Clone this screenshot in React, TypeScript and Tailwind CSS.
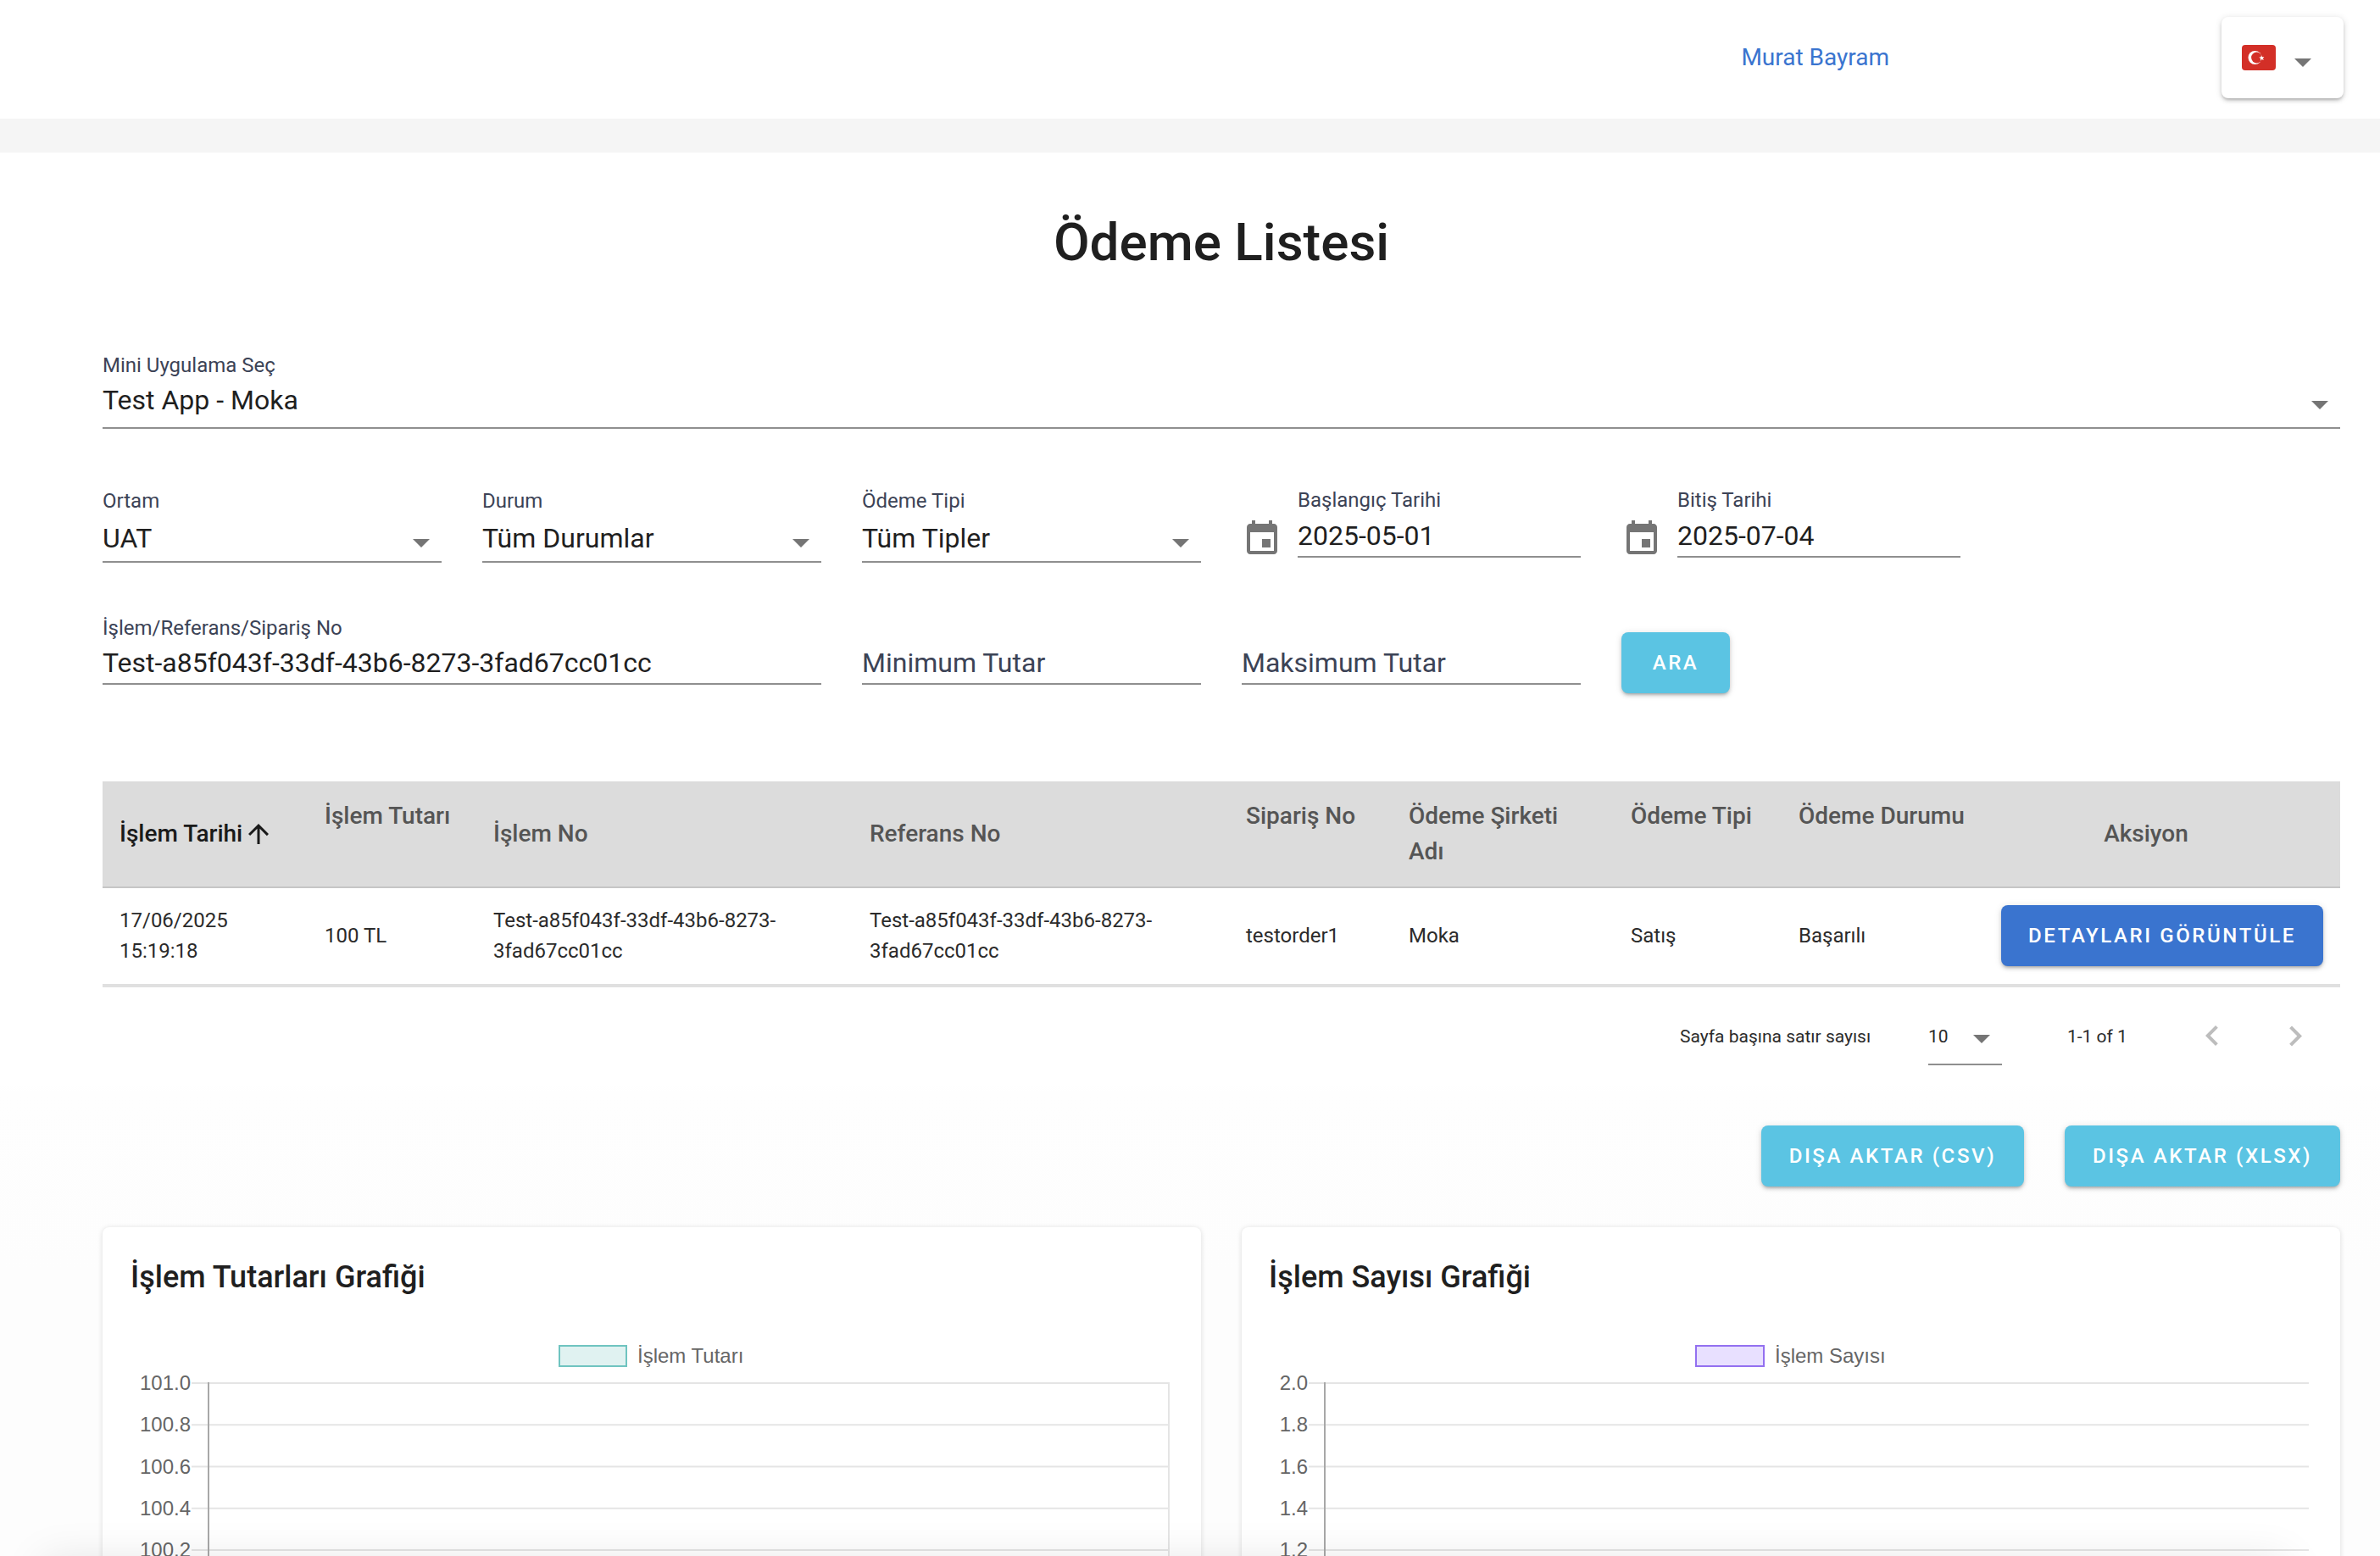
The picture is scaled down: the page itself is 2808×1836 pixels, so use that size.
import React from 'react';

const Caret = ({ className = '' }: { className?: string }) => (
  <svg width="20" height="10" viewBox="0 0 20 10" className={`shrink-0 ${className}`}>
    <path d="M0 0l10 10L20 0z" fill="#757575" />
  </svg>
);

const EventIcon = () => (
  <svg width="48" height="48" viewBox="0 0 24 24" fill="#757575" className="shrink-0 mt-[36px]">
    <path d="M17 12h-5v5h5v-5zM16 1v2H8V1H6v2H5c-1.11 0-1.99.9-1.99 2L3 19c0 1.1.89 2 2 2h14c1.1 0 2-.9 2-2V5c0-1.1-.9-2-2-2h-1V1h-2zm3 18H5V8h14v11z" />
  </svg>
);

const Field = ({
  label,
  value,
  rowClass,
  select,
  placeholder,
}: {
  label?: string;
  value: string;
  rowClass: string;
  select?: boolean;
  placeholder?: boolean;
}) => (
  <div className="min-w-0">
    <div className="h-[30px] text-[24px] leading-[28px] text-[#3c4356]">{label}</div>
    <div className={`flex justify-between border-b-2 border-[#8f8f8f] pr-[14px] ${rowClass}`}>
      <span className={`text-[32px] leading-[44px] ${placeholder ? 'text-[#3c4356]' : 'text-[#1f1f1f]'}`}>{value}</span>
      {select && <Caret className="mt-[23px]" />}
    </div>
  </div>
);

const DateField = ({ label, value }: { label: string; value: string }) => (
  <div className="flex gap-[18px]">
    <EventIcon />
    <div className="flex-1">
      <Field label={label} value={value} rowClass="h-[52px] pt-[4px]" />
    </div>
  </div>
);

const Button = ({ children, className }: { children: React.ReactNode; className: string }) => (
  <button
    className={`h-[72px] rounded-[8px] text-white font-medium text-[24px] tracking-[2.6px] shadow-[0_3px_3px_-2px_rgba(0,0,0,0.2),0_3px_4px_0_rgba(0,0,0,0.14),0_1px_8px_0_rgba(0,0,0,0.12)] ${className}`}
  >
    {children}
  </button>
);

const ChartCard = ({
  title,
  titlePad,
  legend,
  ticks,
  swatchFill,
  swatchStroke,
  swatchX,
  swatchW,
  labelRight,
  axisX,
  gridRight,
}: {
  title: string;
  titlePad: string;
  legend: string;
  ticks: string[];
  swatchFill: string;
  swatchStroke: string;
  swatchX: number;
  swatchW: number;
  labelRight: number;
  axisX: number;
  gridRight: number;
}) => (
  <div className="h-[600px] rounded-[8px] bg-white shadow-[0_1px_6px_rgba(0,0,0,0.14)]">
    <h3 className={`pt-[34px] h-[120px] text-[36px] leading-[50px] font-medium text-[#1f1f1f] ${titlePad}`}>{title}</h3>
    {/* chart.js canvas in the original */}
    <svg width="1296" height="480" className="block" style={{ fontFamily: '"Liberation Sans", Arial, sans-serif' }}>
      <rect x={swatchX + 1} y={20} width={swatchW - 2} height={24} fill={swatchFill} stroke={swatchStroke} strokeWidth="2" />
      <text x={swatchX + swatchW + 12} y={40} fontSize="24" fill="#666666">{legend}</text>
      {ticks.map((t, i) => {
        const y = 64 + i * 49.25;
        return (
          <g key={t}>
            <line x1={labelRight + 1} x2={gridRight} y1={y} y2={y} stroke="#e5e5e5" strokeWidth="2" />
            <text x={labelRight} y={y + 8} textAnchor="end" fontSize="24" fill="#666666">{t}</text>
          </g>
        );
      })}
      <line x1={axisX} x2={axisX} y1={63} y2={480} stroke="#a8a8a8" strokeWidth="2" />
      {gridRight < 1259 && <line x1={gridRight} x2={gridRight} y1={63} y2={480} stroke="#e5e5e5" strokeWidth="2" />}
    </svg>
  </div>
);

export default function App() {
  const th = 'px-[20px] py-[20px] text-[28px] leading-[42px] font-medium text-[#555555] text-left';
  const td = 'px-[20px] pb-[2px] text-[24px] leading-[36px] text-[#2b2b2b]';

  return (
    <div className="relative h-[1836px] overflow-hidden bg-[linear-gradient(#ffffff_1280px,#fefefe_1290px,#fdfdfd_1500px)] font-['Roboto',sans-serif]">
      {/* top bar */}
      <header className="h-[140px] flex items-center justify-end pr-[43px] pb-[4px]">
        <span className="text-[28px] text-[#3a74cf] mr-[392px]">Murat Bayram</span>
        <div className="w-[144px] h-[96px] rounded-[8px] bg-white flex items-center pl-[24px] shadow-[0_3px_3px_-2px_rgba(0,0,0,0.2),0_3px_4px_0_rgba(0,0,0,0.14),0_1px_8px_0_rgba(0,0,0,0.12)]">
          <svg width="40" height="30" viewBox="0 0 40 30" className="shrink-0">
            <rect width="40" height="30" rx="4" fill="#d32f27" />
            <circle cx="15.5" cy="15" r="8" fill="#fff" />
            <circle cx="17.5" cy="15" r="6.4" fill="#d32f27" />
            <polygon
              points="23,12 24,14.2 26.4,14 24.9,15.8 25.8,18 23.6,16.9 21.8,18.4 22.2,16 20.2,14.7 22.5,14.2"
              fill="#fff"
            />
          </svg>
          <Caret className="ml-[22px] mt-[11px]" />
        </div>
      </header>
      <div className="h-[40px] bg-[#f5f5f5]" />

      <main className="pl-[121px] pr-[47px]">
        <h1 className="mt-[70px] h-[72px] text-center text-[62px] leading-[72px] font-medium text-[#1f1f1f]">
          Ödeme Listesi
        </h1>

        <div className="mt-[95px]">
          <Field label="Mini Uygulama Seç" value="Test App - Moka" rowClass="h-[59px] pt-[3px]" select />
        </div>

        <div className="mt-[70px] grid grid-cols-6 gap-x-[48px] items-start">
          <div className="mt-[1px]">
            <Field label="Ortam" value="UAT" rowClass="h-[57px] pt-[6px]" select />
          </div>
          <div className="mt-[1px]">
            <Field label="Durum" value="Tüm Durumlar" rowClass="h-[57px] pt-[6px]" select />
          </div>
          <div className="mt-[1px]">
            <Field label="Ödeme Tipi" value="Tüm Tipler" rowClass="h-[57px] pt-[6px]" select />
          </div>
          <DateField label="Başlangıç Tarihi" value="2025-05-01" />
          <DateField label="Bitiş Tarihi" value="2025-07-04" />
        </div>

        <div className="mt-[63px] grid grid-cols-6 gap-x-[48px] items-start">
          <div className="col-span-2">
            <Field label="İşlem/Referans/Sipariş No" value="Test-a85f043f-33df-43b6-8273-3fad67cc01cc" rowClass="h-[51px] pt-[3px]" />
          </div>
          <Field value="Minimum Tutar" rowClass="h-[51px] pt-[3px]" placeholder />
          <Field value="Maksimum Tutar" rowClass="h-[51px] pt-[3px]" placeholder />
          <Button className="mt-[19px] w-[128px] bg-[#5bc4e3]">ARA</Button>
        </div>

        <table className="mt-[104px] w-full table-fixed border-collapse">
          <colgroup>
            <col className="w-[242px]" />
            <col className="w-[199px]" />
            <col className="w-[444px]" />
            <col className="w-[444px]" />
            <col className="w-[192px]" />
            <col className="w-[262px]" />
            <col className="w-[198px]" />
            <col className="w-[239px]" />
            <col className="w-[420px]" />
          </colgroup>
          <thead>
            <tr className="bg-[#dcdcdc] border-b-2 border-[#c6c6c6]">
              <th className={`${th} align-middle !text-[#1a1a1a]`}>
                <span className="inline-flex items-center">
                  İşlem Tarihi
                  <svg width="36" height="36" viewBox="0 0 24 24" fill="#1a1a1a" className="ml-[1px]">
                    <path d="M4 12l1.41 1.41L11 7.83V20h2V7.83l5.58 5.59L20 12l-8-8-8 8z" />
                  </svg>
                </span>
              </th>
              <th className={`${th} align-top`}>İşlem Tutarı</th>
              <th className={`${th} align-middle`}>İşlem No</th>
              <th className={`${th} align-middle`}>Referans No</th>
              <th className={`${th} align-top`}>Sipariş No</th>
              <th className={`${th} align-top`}>Ödeme Şirketi Adı</th>
              <th className={`${th} align-top`}>Ödeme Tipi</th>
              <th className={`${th} align-top`}>Ödeme Durumu</th>
              <th className={`${th} align-middle !text-center !pr-[58px]`}>Aksiyon</th>
            </tr>
          </thead>
          <tbody>
            <tr className="h-[116px] border-b-4 border-[#e0e0e0]">
              <td className={td}>17/06/2025 15:19:18</td>
              <td className={td}>100 TL</td>
              <td className={td}>Test-a85f043f-33df-43b6-8273-3fad67cc01cc</td>
              <td className={td}>Test-a85f043f-33df-43b6-8273-3fad67cc01cc</td>
              <td className={td}>testorder1</td>
              <td className={td}>Moka</td>
              <td className={td}>Satış</td>
              <td className={td}>Başarılı</td>
              <td className="px-[20px] pb-[2px]">
                <Button className="w-full bg-[#3a74cf] block">DETAYLARI GÖRÜNTÜLE</Button>
              </td>
            </tr>
          </tbody>
        </table>

        {/* pagination */}
        <div className="h-[120px] flex justify-end items-start pt-[44px] pr-[29px] text-[21px] leading-[28px] text-[#2b2b2b] whitespace-nowrap">
          <span className="w-[293px]">Sayfa başına satır sayısı</span>
          <div className="w-[87px] h-[48px] flex justify-between border-b-2 border-[#8f8f8f] pr-[14px]">
            <span>10</span>
            <Caret className="mt-[12px]" />
          </div>
          <span className="w-[72px] ml-[77px]">1-1 of 1</span>
          <div className="flex ml-[75px] gap-[50px] -mt-[10px]">
            <svg width="48" height="48" viewBox="0 0 24 24" fill="#bdbdbd">
              <path d="M15.41 16.09l-4.58-4.59 4.58-4.59L14 5.5l-6 6 6 6z" />
            </svg>
            <svg width="48" height="48" viewBox="0 0 24 24" fill="#bdbdbd">
              <path d="M8.59 16.34l4.58-4.59-4.58-4.59L10 5.75l6 6-6 6z" />
            </svg>
          </div>
        </div>

        <div className="mt-[43px] flex justify-end gap-[48px]">
          <Button className="w-[310px] bg-[#5bc4e3]">DIŞA AKTAR (CSV)</Button>
          <Button className="w-[325px] bg-[#5bc4e3]">DIŞA AKTAR (XLSX)</Button>
        </div>

        <div className="mt-[48px] grid grid-cols-2 gap-x-[48px]">
          <ChartCard
            title="İşlem Tutarları Grafiği"
            titlePad="pl-[33px]"
            legend="İşlem Tutarı"
            ticks={['101.0', '100.8', '100.6', '100.4', '100.2']}
            swatchFill="#e0f2f1"
            swatchStroke="#6fc4c0"
            swatchX={538}
            swatchW={81}
            labelRight={104}
            axisX={125}
            gridRight={1258}
          />
          <ChartCard
            title="İşlem Sayısı Grafiği"
            titlePad="pl-[32px]"
            legend="İşlem Sayısı"
            ticks={['2.0', '1.8', '1.6', '1.4', '1.2']}
            swatchFill="#e8e0ff"
            swatchStroke="#9370f0"
            swatchX={535}
            swatchW={82}
            labelRight={78}
            axisX={98}
            gridRight={1259}
          />
        </div>
      </main>

      {/* shadow of something just below the fold */}
      <div className="absolute left-[60px] right-[120px] top-[1850px] h-[40px] shadow-[0_0_50px_10px_rgba(0,0,0,0.1)] pointer-events-none" />
    </div>
  );
}
